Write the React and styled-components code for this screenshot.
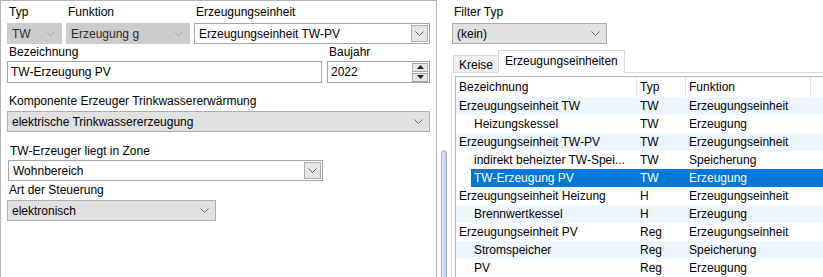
import React from "react";
import styled, { createGlobalStyle } from "styled-components";

const GlobalStyle = createGlobalStyle`
  html, body {
    margin: 0;
    padding: 0;
    background: #fff;
  }
  body {
    width: 823px;
    height: 277px;
    overflow: hidden;
    font-family: "Liberation Sans", Arial, sans-serif;
    font-size: 12px;
    color: #000;
  }
  * { box-sizing: border-box; }
`;

const Window = styled.div`
  display: flex;
  width: 823px;
  height: 277px;
  overflow: hidden;
`;

const LeftPanel = styled.div`
  flex: none;
  width: 437px;
  height: 290px;
  border: 1px solid #b4b4b4;
  border-bottom: none;
  padding: 4px 6px 0 6px;
`;

const Splitter = styled.div`
  flex: none;
  width: 15px;
  padding: 150px 0 0 4px;
`;

const SplitThumb = styled.div`
  width: 6px;
  height: 140px;
  border: 1px solid #9fb1c4;
  border-radius: 3px 3px 0 0;
  background: linear-gradient(90deg, #dde7f1, #bccfe1);
`;

const RightPanel = styled.div`
  flex: 1;
  min-width: 0;
  padding-top: 5px;
`;

const Row = styled.div`
  display: grid;
  grid-template-columns: ${(p) => p.$cols};
  column-gap: ${(p) => p.$gap || 4}px;
  margin-top: ${(p) => p.$mt || 0}px;
`;

const Field = styled.div`
  display: flex;
  flex-direction: column;
  width: ${(p) => (p.$w ? `${p.$w}px` : "auto")};
  margin-top: ${(p) => p.$mt || 0}px;
  margin-left: ${(p) => p.$ml || 0}px;
`;

const Label = styled.div`
  line-height: 15px;
  height: 15px;
  padding-left: 2px;
  margin-bottom: ${(p) => p.$gap ?? 3}px;
  white-space: nowrap;
`;

const comboColors = {
  gray: { bg: "#e1e1e1", border: "#adadad", text: "#000", chev: "#6a6a6a" },
  disabled: { bg: "#cccccc", border: "#cccccc", text: "#2a2a2a", chev: "#a9a9a9" },
  white: { bg: "#fff", border: "#a6a6a6", text: "#000", chev: "#606060" },
};

const ComboBox = styled.div`
  display: flex;
  align-items: center;
  height: 21px;
  padding: 0 ${(p) => (p.$variant === "white" ? 1 : 6)}px 0 4px;
  background: ${(p) => comboColors[p.$variant].bg};
  border: 1px solid ${(p) => comboColors[p.$variant].border};
  color: ${(p) => comboColors[p.$variant].text};
  white-space: nowrap;
`;

const ComboText = styled.span`
  flex: 1;
  overflow: hidden;
`;

const DropButton = styled.div`
  display: flex;
  align-items: center;
  justify-content: center;
  width: 17px;
  height: 17px;
  background: #e5e5e5;
  border: 1px solid #acacac;
`;

const TextInput = styled.div`
  display: flex;
  align-items: center;
  height: 22px;
  padding: 0 1px 0 3px;
  border: 1px solid #a0a0a0;
  background: #fff;
`;

const SpinBox = styled.div`
  display: flex;
  flex-direction: column;
  gap: 1px;
  margin-left: auto;
`;

const SpinButton = styled.div`
  display: flex;
  align-items: center;
  justify-content: center;
  width: 16px;
  height: 9px;
  background: #e6e6e6;
  border: 1px solid #a8a8a8;
`;

const Chevron = ({ color }) => (
  <svg width="9" height="5" viewBox="0 0 9 5">
    <polyline points="0.5,0.5 4.5,4.5 8.5,0.5" fill="none" stroke={color} strokeWidth="1" />
  </svg>
);

const Triangle = ({ up }) => (
  <svg width="7" height="4" viewBox="0 0 7 4">
    <polygon points={up ? "0,4 7,4 3.5,0" : "0,0 7,0 3.5,4"} fill="#202020" />
  </svg>
);

const Combo = ({ variant = "gray", children }) => (
  <ComboBox $variant={variant}>
    <ComboText>{children}</ComboText>
    {variant === "white" ? (
      <DropButton>
        <Chevron color={comboColors.white.chev} />
      </DropButton>
    ) : (
      <Chevron color={comboColors[variant].chev} />
    )}
  </ComboBox>
);

const TabStrip = styled.div`
  display: flex;
  align-items: flex-end;
  height: 23px;
  margin-top: 6px;
  padding-left: 1px;
  border-bottom: 1px solid #d9d9d9;
`;

const Tab = styled.div`
  height: ${(p) => (p.$active ? 23 : 18)}px;
  margin-bottom: -1px;
  padding: ${(p) => (p.$active ? "3px 6px 0" : "2px 5px 0")};
  background: ${(p) => (p.$active ? "#fff" : "#f0f0f0")};
  border: 1px solid #d9d9d9;
  border-bottom: ${(p) => (p.$active ? "1px solid #fff" : "1px solid #d9d9d9")};
  border-right: ${(p) => (p.$active ? "1px solid #d9d9d9" : "none")};
  white-space: nowrap;
`;

const TabPage = styled.div`
  border-left: 1px solid #d9d9d9;
  padding: 3px 0 0 3px;
  margin-left: -1px;
`;

const ListView = styled.div`
  border-left: 1px solid #b5b5b5;
  border-top: 1px solid #b5b5b5;
  height: 210px;
`;

const HeaderRow = styled.div`
  display: grid;
  grid-template-columns: 181px 49px 125px;
  height: 20px;
`;

const HeaderCell = styled.div`
  line-height: 20px;
  padding-left: 3px;
  border-right: 1px solid #e5e5e5;
`;

const ItemRow = styled.div`
  display: grid;
  grid-template-columns: ${(p) => 181 - p.$indent}px 49px 125px;
  height: 18px;
  line-height: 18px;
  margin-left: ${(p) => p.$indent}px;
  background: ${(p) => (p.$selected ? "#0078d7" : p.$alt ? "#eef7fd" : "transparent")};
  color: ${(p) => (p.$selected ? "#fff" : "#000")};
`;

const Cell = styled.div`
  padding-left: ${(p) => 3 + (p.$pad || 0)}px;
  white-space: nowrap;
  overflow: hidden;
`;

const items = [
  { name: "Erzeugungseinheit TW", typ: "TW", fn: "Erzeugungseinheit", child: false },
  { name: "Heizungskessel", typ: "TW", fn: "Erzeugung", child: true },
  { name: "Erzeugungseinheit TW-PV", typ: "TW", fn: "Erzeugungseinheit", child: false },
  { name: "indirekt beheizter TW-Spei...", typ: "TW", fn: "Speicherung", child: true },
  { name: "TW-Erzeugung PV", typ: "TW", fn: "Erzeugung", child: true, selected: true },
  { name: "Erzeugungseinheit Heizung", typ: "H", fn: "Erzeugungseinheit", child: false },
  { name: "Brennwertkessel", typ: "H", fn: "Erzeugung", child: true },
  { name: "Erzeugungseinheit PV", typ: "Reg", fn: "Erzeugungseinheit", child: false },
  { name: "Stromspeicher", typ: "Reg", fn: "Speicherung", child: true },
  { name: "PV", typ: "Reg", fn: "Erzeugung", child: true },
];

const INDENT = 15;

const App = () => {
  return (
    <>
      <GlobalStyle />
      <Window>
        <LeftPanel>
          <Row $cols="55px 124px 1fr">
            <Field>
              <Label>Typ</Label>
              <Combo variant="disabled">TW</Combo>
            </Field>
            <Field>
              <Label>Funktion</Label>
              <Combo variant="disabled">Erzeugung g</Combo>
            </Field>
            <Field>
              <Label>Erzeugungseinheit</Label>
              <Combo variant="white">Erzeugungseinheit TW-PV</Combo>
            </Field>
          </Row>

          <Row $cols="1fr 103px" $gap={5} $mt={1}>
            <Field>
              <Label $gap={1}>Bezeichnung</Label>
              <TextInput>TW-Erzeugung PV</TextInput>
            </Field>
            <Field>
              <Label $gap={1}>Baujahr</Label>
              <TextInput>
                2022
                <SpinBox>
                  <SpinButton>
                    <Triangle up />
                  </SpinButton>
                  <SpinButton>
                    <Triangle />
                  </SpinButton>
                </SpinBox>
              </TextInput>
            </Field>
          </Row>

          <Field $mt={11}>
            <Label $gap={2}>Komponente Erzeuger Trinkwassererwärmung</Label>
            <Combo>elektrische Trinkwassererzeugung</Combo>
          </Field>

          <Field $mt={12} $w={315} $ml={1}>
            <Label $gap={1}>TW-Erzeuger liegt in Zone</Label>
            <Combo variant="white">Wohnbereich</Combo>
          </Field>

          <Field $mt={2} $w={209}>
            <Label $gap={2}>Art der Steuerung</Label>
            <Combo>elektronisch</Combo>
          </Field>
        </LeftPanel>

        <Splitter>
          <SplitThumb />
        </Splitter>

        <RightPanel>
          <Field $w={155}>
            <Label $gap={3}>Filter Typ</Label>
            <Combo>(kein)</Combo>
          </Field>

          <TabStrip>
            <Tab>Kreise</Tab>
            <Tab $active>Erzeugungseinheiten</Tab>
          </TabStrip>

          <TabPage>
            <ListView>
              <HeaderRow>
                <HeaderCell>Bezeichnung</HeaderCell>
                <HeaderCell>Typ</HeaderCell>
                <HeaderCell>Funktion</HeaderCell>
              </HeaderRow>
              {items.map((it, i) => (
                <ItemRow
                  key={it.name}
                  $indent={it.selected ? INDENT : 0}
                  $alt={i % 2 === 0}
                  $selected={it.selected}
                >
                  <Cell $pad={it.child && !it.selected ? INDENT : 0}>{it.name}</Cell>
                  <Cell>{it.typ}</Cell>
                  <Cell>{it.fn}</Cell>
                </ItemRow>
              ))}
            </ListView>
          </TabPage>
        </RightPanel>
      </Window>
    </>
  );
};

export default App;
